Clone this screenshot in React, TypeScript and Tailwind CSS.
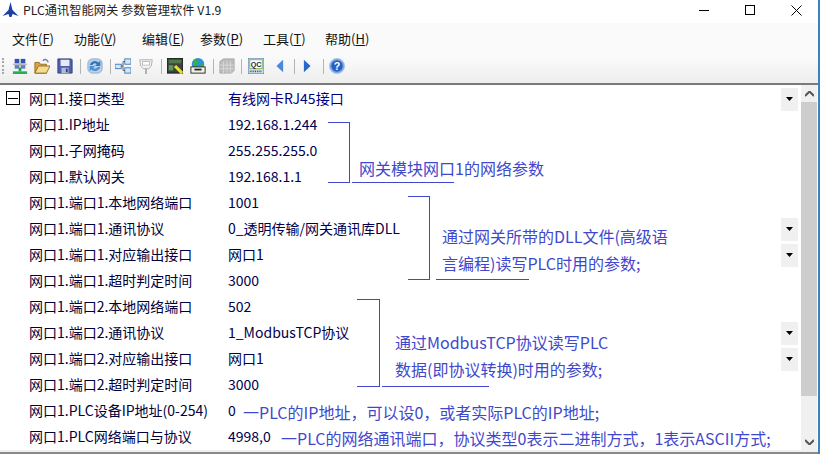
import React from 'react';

const rows = [
  ['网口1.IP地址', '192.168.1.244', false],
  ['网口1.子网掩码', '255.255.255.0', false],
  ['网口1.默认网关', '192.168.1.1', false],
  ['网口1.端口1.本地网络端口', '1001', false],
  ['网口1.端口1.通讯协议', '0_透明传输/网关通讯库DLL', true],
  ['网口1.端口1.对应输出接口', '网口1', true],
  ['网口1.端口1.超时判定时间', '3000', false],
  ['网口1.端口2.本地网络端口', '502', false],
  ['网口1.端口2.通讯协议', '1_ModbusTCP协议', true],
  ['网口1.端口2.对应输出接口', '网口1', true],
  ['网口1.端口2.超时判定时间', '3000', false],
  ['网口1.PLC设备IP地址(0-254)', '0', false],
  ['网口1.PLC网络端口与协议', '4998,0', false],
] as const;

const menus = [
  ['文件(', 'F', ')', 'w-[62px]'],
  ['功能(', 'V', ')', 'w-[68px]'],
  ['编辑(', 'E', ')', 'w-[58px]'],
  ['参数(', 'P', ')', 'w-[63px]'],
  ['工具(', 'T', ')', 'w-[62px]'],
  ['帮助(', 'H', ')', 'w-[50px]'],
] as const;

const DropBtn = () => (
  <div className="w-[17px] h-[23px] bg-[#f0f0f0] flex items-center justify-center">
    <svg width="7" height="4" viewBox="0 0 7 4"><path d="M0 0h7L3.500 4z" fill="#000" /></svg>
  </div>
);

const Sep = ({ className }: { className: string }) => <div className={`w-px h-[15px] bg-[#b4b4b4] shrink-0 ${className}`} />;

const Icon = ({ className, children }: { className: string; children: React.ReactNode }) => (
  <svg width="16" height="16" viewBox="0 0 18 18" className={`shrink-0 ${className}`}>{children}</svg>
);

const Toolbar = () => (
  <div className="h-[29px] flex items-center pb-[5px] pl-[2px] bg-gradient-to-b from-[#fbfbfb] to-[#eeeeee] shrink-0">
    <div className="w-[3px] h-[16px] border-l-2 border-dotted border-[#a8a8a8] shrink-0" />
    <Icon className="ml-[7px]">
      <rect x="3" y="1" width="5" height="5" fill="#2f55b0" /><rect x="10" y="1" width="5" height="5" fill="#2f55b0" />
      <rect x="3" y="8" width="5" height="4" fill="#5f7fc8" /><rect x="10" y="8" width="5" height="4" fill="#5f7fc8" />
      <path d="M1 7h16M9 1v13" stroke="#999" /><path d="M9 11v4" stroke="#14a03c" strokeWidth="3" />
      <rect x="1" y="15" width="16" height="3" fill="#22b14c" />
    </Icon>
    <Icon className="ml-[6px]">
      <path d="M1 5h5l1 2h7v10H1z" fill="#d9a63e" stroke="#8f6a22" /><path d="M5 9h13l-4 8H1z" fill="#f6dc8f" stroke="#8f6a22" />
      <path d="M10 3c2-2 5-2 6 2" stroke="#6d7f99" strokeWidth="1.500" fill="none" />
    </Icon>
    <Icon className="ml-[7px]">
      <path d="M1 1h15l1 1v15H1z" fill="#4f60ad" stroke="#303c78" />
      <rect x="4" y="2" width="10" height="7" fill="#e6e9f6" /><rect x="5" y="11" width="8" height="6" fill="#b3bad6" />
      <rect x="10" y="12" width="2" height="4" fill="#303c78" />
    </Icon>
    <Sep className="ml-[7px]" />
    <Icon className="ml-[6px]">
      <rect x="1" y="1" width="16" height="16" rx="5" fill="#b9d0e8" stroke="#8ca7c6" />
      <path d="M3 8a6 6 0 0 1 10-3l2-2v6h-6l2-2a3 3 0 0 0-5 1z" fill="#2f78c0" />
      <path d="M15 10a6 6 0 0 1-10 3l-2 2V9h6l-2 2a3 3 0 0 0 5-1z" fill="#4a90cf" />
    </Icon>
    <Sep className="ml-[7px]" />
    <Icon className="ml-[4px]">
      <rect x="0" y="7" width="7" height="5" fill="#d5e6f7" stroke="#3d76b8" />
      <rect x="11" y="1" width="7" height="6" fill="#d5e6f7" stroke="#3d76b8" />
      <rect x="11" y="11" width="7" height="6" fill="#d5e6f7" stroke="#3d76b8" />
      <path d="M7 9h2V4h2M9 9v5h2" stroke="#555" fill="none" />
    </Icon>
    <Icon className="ml-[7px]">
      <path d="M2 2h14l-1 7-3 3H6L3 9z" fill="#f2f2f2" stroke="#a9a9a9" />
      <rect x="5" y="4" width="8" height="4" fill="#fff" stroke="#bbb" />
      <path d="M9 12v6" stroke="#a9a9a9" strokeWidth="2" />
    </Icon>
    <Sep className="ml-[7px]" />
    <Icon className="ml-[5px]">
      <rect x="0" y="0" width="18" height="17" fill="#3a423c" stroke="#111" />
      <rect x="2" y="2" width="14" height="4" fill="#4f7a50" /><rect x="2" y="8" width="5" height="6" fill="#5b9a55" />
      <path d="M9 9l8 8" stroke="#eadf2a" strokeWidth="3.500" />
    </Icon>
    <Icon className="ml-[7px]">
      <circle cx="9" cy="7" r="7" fill="#2f8fd8" /><path d="M4 2l6 1-1 4-6 2zM11 8l4-3 1 5z" fill="#2fb34a" />
      <rect x="1" y="10" width="16" height="7" fill="#f0efe2" stroke="#222" /><path d="M5 13h8" stroke="#222" strokeWidth="2" />
    </Icon>
    <Sep className="ml-[7px]" />
    <Icon className="ml-[5px]">
      <path d="M1 4l4-3h12v13l-3 3H1z" fill="#bdbdbd" stroke="#a5a5a5" />
      <path d="M5 4v13M9 4v13M13 4v13M1 8h16M1 12h16" stroke="#dadada" />
    </Icon>
    <Sep className="ml-[6px]" />
    <Icon className="ml-[6px]">
      <rect x="0" y="0" width="18" height="18" fill="#cfe0ef" stroke="#3e6c9e" />
      <rect x="2" y="2" width="14" height="10" fill="#fff" stroke="#7cb342" />
      <text x="9" y="10" textAnchor="middle" fontSize="8" fontWeight="700" fontFamily="Liberation Sans, sans-serif" fill="#1a1a40">QC</text>
      <path d="M2 15h14" stroke="#444" strokeWidth="2" strokeDasharray="1 1" />
    </Icon>
    <Icon className="ml-[8px]"><path d="M12.500 2v14L5 9z" fill="#4a88dc" /></Icon>
    <Sep className="ml-[6px]" />
    <Icon className="ml-[4px]"><path d="M5.500 2v14L13 9z" fill="#2868c8" /></Icon>
    <Sep className="ml-[8px]" />
    <Icon className="ml-[5px]">
      <circle cx="9" cy="9" r="8.500" fill="#7fa8e6" stroke="#a8c4ee" />
      <circle cx="9" cy="9" r="6.500" fill="#2a60c0" />
      <text x="9" y="13" textAnchor="middle" fontSize="12" fontWeight="700" fontFamily="Liberation Sans, sans-serif" fill="#fff">?</text>
    </Icon>
  </div>
);

export default function App() {
  return (
    <div className="w-[820px] h-[454px] overflow-hidden bg-white border-r-2 border-[#3b82c4] flex flex-col font-['Noto_Sans_CJK_SC','Liberation_Sans',sans-serif] text-[14px] text-black">
      <div className="h-[23px] flex items-center pb-[3px] bg-white shrink-0">
        <svg width="17" height="16" viewBox="0 0 17 16" className="ml-[2px] mr-[4px]">
          <path d="M8.500 0l2 8 6 6-6-2-1 3h-2l-1-3-6 2 6-6z" fill="#1e3fa8" />
        </svg>
        <span className="text-[12.250px] text-[#222]">PLC通讯智能网关 参数管理软件 V1.9</span>
        <div className="ml-auto -mr-px flex items-center">
          <div className="w-[46px] flex justify-center"><div className="w-[10px] h-px bg-black" /></div>
          <div className="w-[46px] flex justify-center"><div className="w-[10px] h-[10px] border border-black" /></div>
          <div className="w-[46px] flex justify-center">
            <svg width="11" height="11" viewBox="0 0 11 11"><path d="M.5.500l10 10M10.500.500l-10 10" stroke="#000" /></svg>
          </div>
        </div>
      </div>
      <div className="h-[31px] flex items-center pl-[12px] bg-[#fafafa] text-[13px] text-[#111] shrink-0">
        {menus.map(([a, k, b, w]) => (
          <div key={k} className={`${w} whitespace-nowrap`}>
            {a}<span className="underline">{k}</span>{b}
          </div>
        ))}
      </div>
      <Toolbar />
      <div className="h-[2px] bg-[#7a7a7a] shrink-0" />
      <div className="flex-1 flex min-h-0 relative">
        <div className="flex-1 pt-[1px] relative">
          <div className="h-[26px] flex items-center">
            <div className="w-[14px] h-[14px] ml-[6px] mr-[9px] mb-[2px] border border-black flex items-center justify-center shrink-0">
              <div className="w-[10px] h-px bg-black" />
            </div>
            <div className="w-[199px] pb-[2px] text-[#00003c]">网口1.接口类型</div>
            <div className="pb-[2px] text-[#000080]">有线网卡RJ45接口</div>
            <div className="ml-auto mr-[3px]"><DropBtn /></div>
          </div>
          {rows.map(([label, value, drop]) => (
            <div key={label} className="h-[26px] flex items-center pl-[29px]">
              <div className="w-[199px] pb-[2px] text-[#00003c] whitespace-nowrap">{label}</div>
              <div className="pb-[2px] text-[#00004c] whitespace-nowrap">{value}</div>
              {drop && <div className="ml-auto mr-[3px]"><DropBtn /></div>}
            </div>
          ))}

          {/* annotations drawn on top of the grid */}
          <div className="absolute left-[328px] top-[37px] w-[22px] h-[61px] border-t border-r border-b border-[#3f48cc]" />
          <div className="absolute left-[352px] top-[97px] w-[102px] h-px bg-[#3f48cc]" />
          <div className="absolute left-[359px] top-[71px] text-[16px] leading-[24px] text-[#3f48cc] whitespace-nowrap">网关模块网口1的网络参数</div>
          <div className="absolute left-[408px] top-[111px] w-[22px] h-[84px] border-t border-r border-b border-[#3f48cc]" />
          <div className="absolute left-[436px] top-[194px] w-[93px] h-px bg-[#3f48cc]" />
          <div className="absolute left-[442px] top-[138px] text-[16px] leading-[26.500px] text-[#3f48cc] whitespace-nowrap">通过网关所带的DLL文件(高级语<br />言编程)读写PLC时用的参数;</div>
          <div className="absolute left-[357px] top-[214px] w-[23px] h-[88px] border-t border-r border-b border-[#3f48cc]" />
          <div className="absolute left-[382px] top-[301px] w-[107px] h-px bg-[#3f48cc]" />
          <div className="absolute left-[395px] top-[244px] text-[16px] leading-[27px] text-[#3f48cc] whitespace-nowrap">通过ModbusTCP协议读写PLC<br />数据(即协议转换)时用的参数;</div>
          <div className="absolute left-[243px] top-[315px] text-[16px] leading-[24px] text-[#3f48cc] whitespace-nowrap">一PLC的IP地址，可以设0，或者实际PLC的IP地址;</div>
          <div className="absolute left-[281px] top-[341px] text-[16px] leading-[24px] text-[#3f48cc] whitespace-nowrap">一PLC的网络通讯端口，协议类型0表示二进制方式，1表示ASCII方式;</div>
        </div>
        <div className="w-[16px] mr-[1px] bg-[#f0f0f0] flex flex-col items-center shrink-0">
          <div className="h-[17px] flex items-center justify-center">
            <svg width="9" height="6" viewBox="0 0 9 6"><path d="M0 5l4.500-4.500L9 5" stroke="#555" strokeWidth="2" fill="none" /></svg>
          </div>
          <div className="w-full h-[294px] bg-[#cdcdcd] shrink-0" />
          <div className="mt-auto h-[17px] flex items-center justify-center">
            <svg width="9" height="6" viewBox="0 0 9 6"><path d="M0 1l4.500 4.500L9 1" stroke="#555" strokeWidth="2" fill="none" /></svg>
          </div>
        </div>
      </div>
      <div className="h-[2px] bg-[#f0f0f0] shrink-0" />
      <div className="h-[2px] bg-[#8a8a8a] shrink-0" />
    </div>
  );
}
